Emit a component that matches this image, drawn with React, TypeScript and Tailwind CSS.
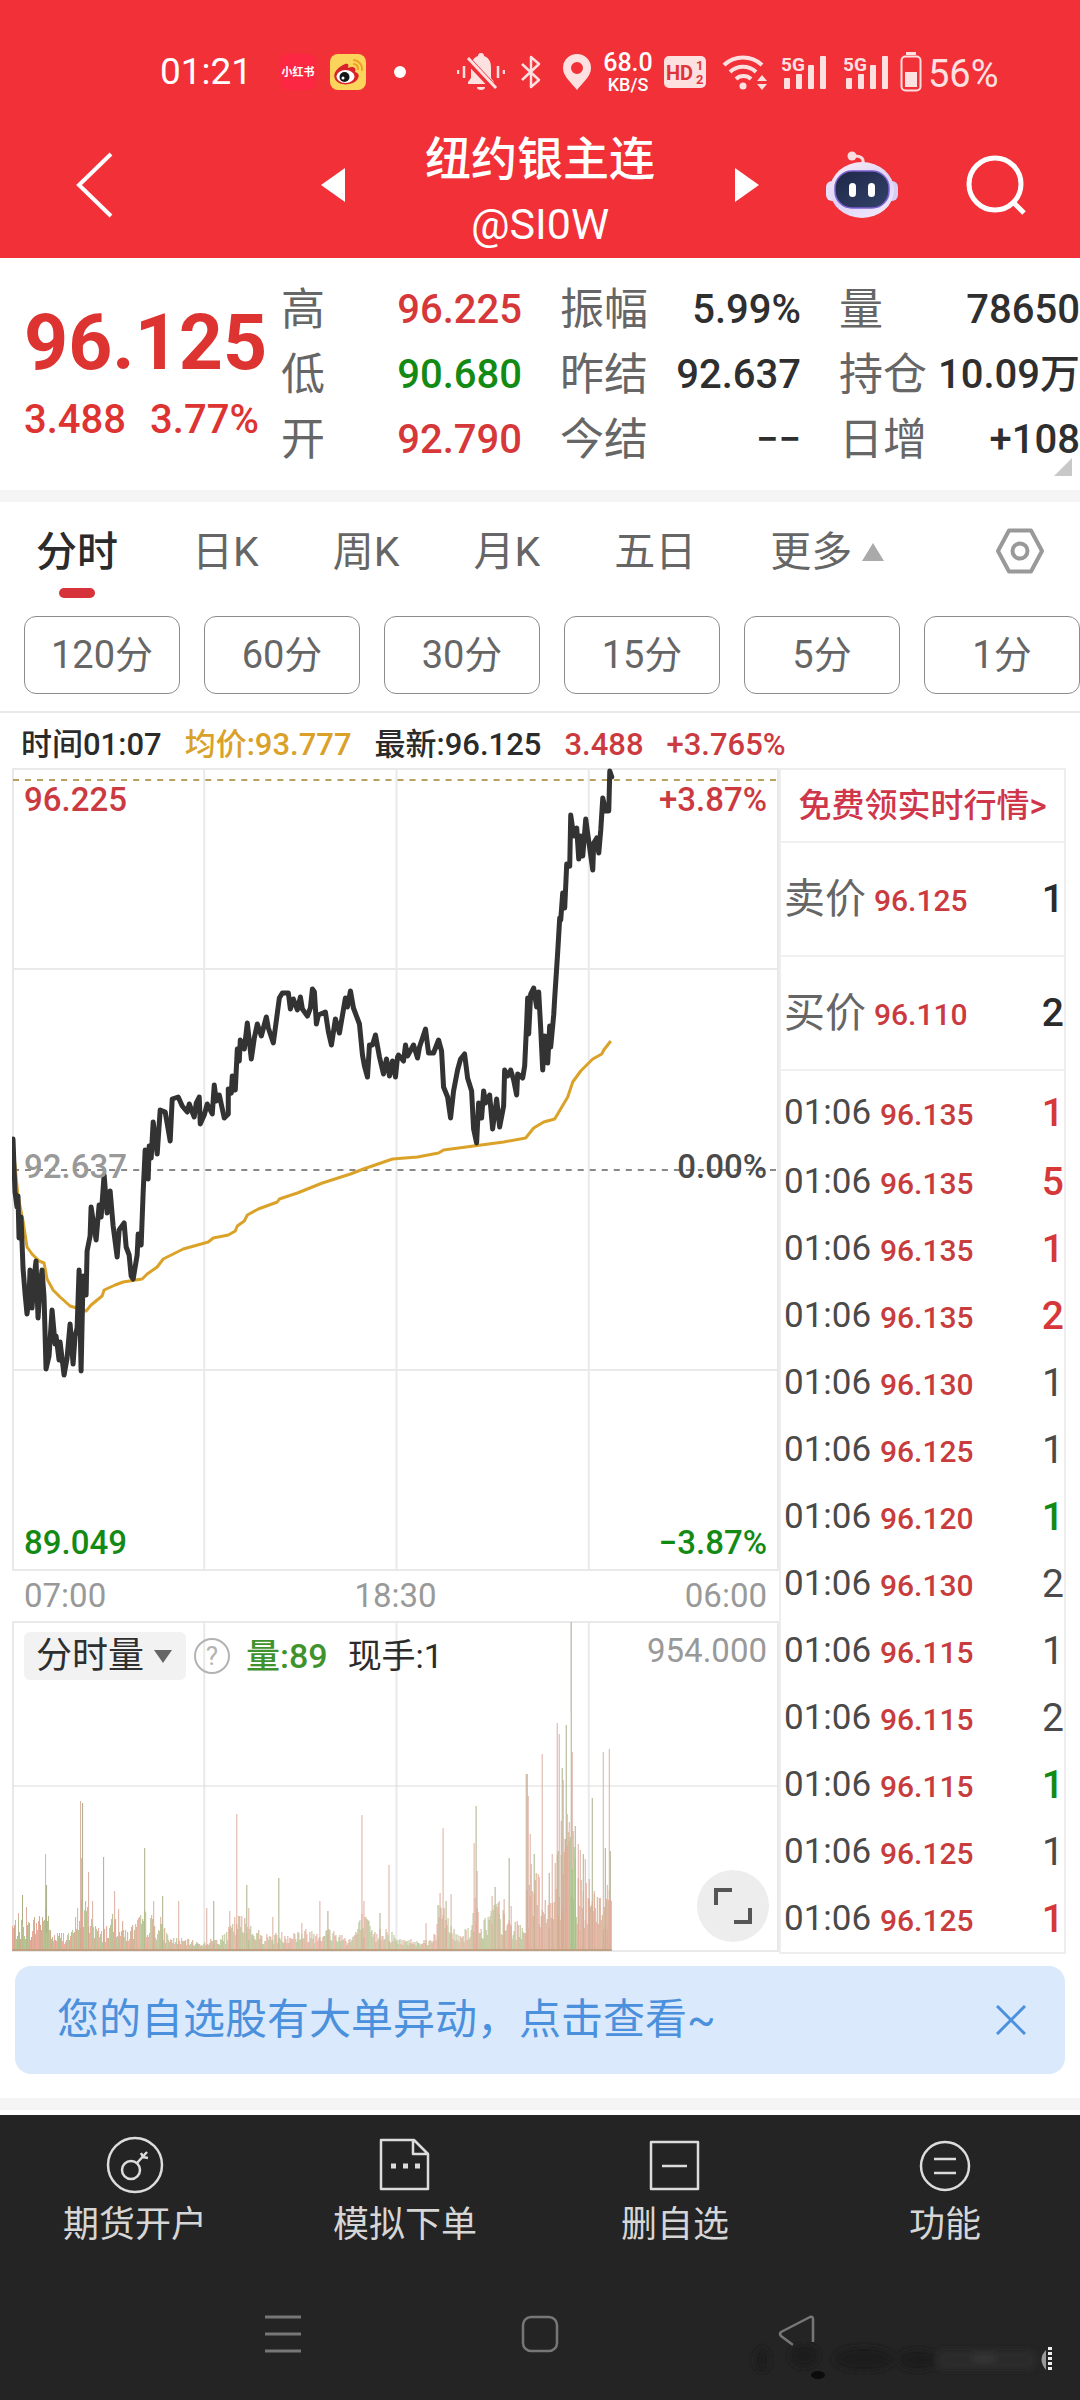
/**
 * QuotePage - Futures quote detail screen
 *
 * Status bar, instrument header, quote summary, intraday chart with
 * volume, tick list on the right and the bottom action bar.
 */

import React, { useMemo, useState } from 'react';
import clsx from 'clsx';

type Tone = 'red' | 'green' | 'dark' | 'gray';

const toneClass: Record<Tone, string> = {
  red: 'text-[#d6383a]',
  green: 'text-[#138a13]',
  dark: 'text-[#2f2f2f]',
  gray: 'text-[#4a4a4a]',
};

interface Stat {
  label: string;
  value: string;
  tone: Tone;
}

// Row by row, three columns
const stats: Stat[] = [
  { label: '高', value: '96.225', tone: 'red' },
  { label: '振幅', value: '5.99%', tone: 'dark' },
  { label: '量', value: '78650', tone: 'dark' },
  { label: '低', value: '90.680', tone: 'green' },
  { label: '昨结', value: '92.637', tone: 'dark' },
  { label: '持仓', value: '10.09万', tone: 'dark' },
  { label: '开', value: '92.790', tone: 'red' },
  { label: '今结', value: '−−', tone: 'dark' },
  { label: '日增', value: '+108', tone: 'dark' },
];

const tabs = ['分时', '日K', '周K', '月K', '五日'];
const periods = ['120分', '60分', '30分', '15分', '5分', '1分'];

interface Trade {
  price: string;
  qty: number;
  tone: Tone;
}

const trades: Trade[] = [
  { price: '96.135', qty: 1, tone: 'red' },
  { price: '96.135', qty: 5, tone: 'red' },
  { price: '96.135', qty: 1, tone: 'red' },
  { price: '96.135', qty: 2, tone: 'red' },
  { price: '96.130', qty: 1, tone: 'gray' },
  { price: '96.125', qty: 1, tone: 'gray' },
  { price: '96.120', qty: 1, tone: 'green' },
  { price: '96.130', qty: 2, tone: 'gray' },
  { price: '96.115', qty: 1, tone: 'gray' },
  { price: '96.115', qty: 2, tone: 'gray' },
  { price: '96.115', qty: 1, tone: 'green' },
  { price: '96.125', qty: 1, tone: 'gray' },
  { price: '96.125', qty: 1, tone: 'red' },
];

const pricePoints =
  '1,371 2,399 3,424 5,439 6,428 7,470 9,449 10,474 11,500 13,525 15,546 17,530 18,502 20,540 22,510 24,493 26,550 28,520 30,502 32,529 34,601 37,588 40,542 43,576 44,568 47,592 48,574 52,607 55,590 58,556 61,596 63,568 65,560 67,502 69,603 ' +
  '71,508 74,527 75,483 78,468 79,439 84,472 87,437 89,449 92,407 95,445 98,423 101,458 105,489 107,462 112,455 114,479 117,487 119,508 121,511 125,487 126,466 129,477 131,424 133,382 136,411 137,378 139,390 141,354 145,386 148,342 153,344 158,373 160,331 166,329 170,338 175,344 177,336 180,344 182,349 184,335 187,329 188,356 192,347 195,336 200,346 202,317 204,333 207,327 212,350 216,346 216,321 219,325 220,308 223,322 225,281 227,293 228,272 232,281 235,255 239,291 242,270 245,256 249,268 254,249 256,260 261,275 263,260 267,230 270,225 276,225 278,241 281,231 285,242 288,229 290,241 295,248 298,240 300,221 302,224 304,256 306,247 313,244 316,264 319,277 323,251 327,265 333,230 335,239 338,223 341,240 347,256 350,287 352,298 355,309 357,277 360,277 363,267 367,289 371,306 374,291 377,308 380,293 383,309 385,289 ' +
  '386,287 391,293 393,277 395,288 401,277 405,290 407,279 413,261 416,285 421,285 426,272 429,283 431,319 435,329 438,350 441,323 445,302 448,291 452,286 455,310 459,323 461,361 464,375 466,335 469,350 471,323 473,335 477,327 480,361 484,331 487,359 491,338 492,302 495,308 498,302 501,312 504,327 505,306 510,310 512,298 514,255 515,230 516,266 518,226 521,220 524,239 526,224 528,260 530,302 532,268 535,295 537,258 538,279 541,247 542,230 545,184 547,150 548,152 550,125 552,140 554,96 557,98 558,47 561,68 564,60 566,91 568,68 570,88 573,51 575,66 580,102 581,75 584,70 586,85 588,62 590,30 593,43 596,43 597,3 599,9';

const averagePoints =
  '1,378 6,428 11,453 15,479 20,486 27,493 32,495 35,511 41,522 48,529 58,538 74,543 79,537 90,528 92,522 103,517 111,514 130,511 135,506 145,499 151,491 171,481 196,474 201,470 216,467 223,463 225,458 232,453 235,447 246,441 265,434 267,431 285,425 310,415 338,406 351,401 380,391 405,389 426,385 431,382 461,378 491,374 513,370 521,360 531,354 542,351 555,329 560,314 568,303 580,291 589,286 591,282 598,273';

// [x, height] of the tall volume bars
const spikes: [number, number][] = [
  [6, 38], [10, 56], [14, 44], [33, 97], [34, 66], [68, 150], [69, 93], [70, 148], [76, 79], [80, 50], [91, 94], [102, 60], [106, 42],
  [132, 103], [141, 50], [148, 34], [150, 55], [166, 50], [194, 43], [201, 50], [217, 40], [224, 137], [234, 66], [236, 43], [260, 34], [266, 73],
  [289, 28], [307, 50], [315, 40], [349, 136], [351, 50], [367, 38], [376, 86], [413, 28], [425, 46], [427, 58], [430, 123], [433, 50], [438, 57],
  [461, 108], [463, 145], [464, 80], [479, 55], [482, 64], [486, 50], [491, 52], [496, 93], [498, 45],
  [513, 177], [514, 177], [515, 155], [517, 117], [521, 97], [526, 74], [529, 197], [536, 78], [539, 97], [544, 228], [545, 100], [546, 217],
  [548, 130], [549, 183], [550, 171], [552, 112], [553, 226], [554, 137], [556, 110], [558, 329], [559, 199], [560, 120], [562, 125], [565, 107], [567, 101],
  [570, 97], [572, 92], [576, 72], [579, 153], [581, 60], [590, 199], [592, 103], [594, 66], [596, 202], [597, 100],
];

// [x, typical height] of the ordinary bars
const envelope: [number, number][] = [
  [0, 26], [18, 24], [33, 40], [40, 13], [60, 16], [68, 48], [78, 36], [88, 14], [103, 32], [115, 16], [133, 34], [150, 20], [158, 10], [190, 5],
  [212, 12], [224, 30], [236, 26], [250, 12], [285, 16], [318, 18], [338, 9], [350, 32], [362, 14], [370, 22], [386, 8], [418, 8], [430, 44], [442, 14],
  [455, 20], [463, 46], [470, 24], [482, 44], [492, 30], [500, 24], [512, 20], [516, 80], [525, 62], [536, 40], [545, 90], [558, 115], [566, 60], [580, 48], [592, 40], [598, 56],
];

interface Bar {
  x: number;
  height: number;
  fill: string;
}

function buildVolume(): Bar[] {
  let seed = 7;
  const random = () => {
    seed = (seed * 1103515245 + 12345) % 2147483648;
    return seed / 2147483648;
  };
  const fills = ['#b3bd8c', '#eaa79b', '#cfab8d', '#b9c495'];
  const bars: Bar[] = [];
  let seg = 0;
  for (let x = 0; x <= 598; x++) {
    while (seg < envelope.length - 2 && envelope[seg + 1][0] < x) seg++;
    const [x0, h0] = envelope[seg];
    const [x1, h1] = envelope[seg + 1];
    const base = h0 + ((h1 - h0) * (x - x0)) / (x1 - x0);
    const height = 3 + base * (0.3 + 0.9 * random());
    let fill = fills[Math.floor(random() * 4)];
    if (x > 556 && x < 564) fill = '#a3c487';
    else if (x > 510) fill = random() < 0.7 ? '#d3ab90' : '#e8aa9c';
    bars.push({ x, height: Math.round(height), fill });
  }
  return bars;
}

/* ---------- Status bar ---------- */

function SignalIcon() {
  return (
    <svg viewBox="0 0 48 38" className="h-[38px] w-12" fill="#fde0e0">
      <rect x="4" y="25" width="6" height="11" rx="1" />
      <rect x="16" y="21" width="6" height="15" rx="1" />
      <rect x="28" y="12" width="6" height="24" rx="1" />
      <rect x="40" y="3" width="6" height="33" rx="1" />
      <text x="1" y="18" fontSize="19" fontWeight="700" fontFamily="Roboto">5G</text>
    </svg>
  );
}

function StatusBar() {
  return (
    <div className="flex h-[72px] items-center pl-40 text-white">
      <span className="w-[92px] text-[37px] leading-[44px]">01:21</span>
      <span className="ml-7 flex h-9 w-9 items-center justify-center rounded-lg bg-[#fc2843] text-[11px] leading-none font-bold">
        小红书
      </span>
      <svg viewBox="0 0 36 36" className="ml-3.5 h-9 w-9">
        <rect width="36" height="36" rx="8" fill="#fbd45c" />
        <path d="M24 6 A9 9 0 0 1 32 16 M24 10 A5 5 0 0 1 28 15" fill="none" stroke="#f29c28" strokeWidth="2" strokeLinecap="round" />
        <path d="M15 10 C8 13 2 19 5 25 C8 32 22 32 27 26 C30 22 29 19 25 18 C27 13 22 12 18 14 C19 10 18 9 15 10Z" fill="#d8232a" />
        <ellipse cx="15.500" cy="22.500" rx="9" ry="6.500" fill="#fff" />
        <circle cx="14.500" cy="23" r="5" fill="#161616" />
        <circle cx="13" cy="24" r="1.500" fill="#fff" />
      </svg>
      <span className="ml-7 h-3 w-3 rounded-full bg-white" />
      <svg viewBox="0 0 48 40" className="ml-[51px] h-10 w-12" fill="#fde0e0">
        <path d="M21 4a3 3 0 0 1 6 0c5 2 7 6 7 11v11l3 4v2H11v-2l3-4V15c0-5 2-9 7-11Z" />
        <path d="M20 35h8a4 3 0 0 1-8 0Z" />
        <path d="M9 6 38 37" stroke="#f03037" strokeWidth="7" />
        <path d="M11 6 39 36" stroke="#fde0e0" strokeWidth="3" />
        <path d="M1 18v4M7 14v12M41 14v12M47 18v4" stroke="#fde0e0" strokeWidth="2.500" />
      </svg>
      <svg viewBox="0 0 22 36" className="ml-[15px] h-9 w-[22px]" fill="none" stroke="#fde0e0" strokeWidth="2.500" strokeLinejoin="round">
        <path d="M2 10 19 26 11 33V3l8 7L2 26" />
      </svg>
      <svg viewBox="0 0 30 38" className="ml-5 h-[38px] w-[30px]">
        <path fillRule="evenodd" fill="#fde0e0" d="M15 1a14 14 0 0 0-14 14c0 9 9 15 14 22 5-7 14-13 14-22A14 14 0 0 0 15 1Zm0 8a6 6 0 1 1 0 12 6 6 0 0 1 0-12Z" />
      </svg>
      <span className="ml-2.5 flex w-[52px] flex-col items-center font-medium">
        <span className="text-[25px] leading-[25px]">68.0</span>
        <span className="text-[18px] leading-[19px]">KB/S</span>
      </span>
      <svg viewBox="0 0 42 32" className="ml-2.5 h-8 w-[42px]">
        <rect width="42" height="32" rx="5" fill="#fde0e0" />
        <g fill="#e0343b" fontFamily="Roboto" fontWeight="700">
          <text x="2" y="24" fontSize="20">HD</text>
          <text x="32" y="14" fontSize="13">1</text>
          <text x="32" y="28" fontSize="13">2</text>
        </g>
      </svg>
      <svg viewBox="0 0 46 38" className="ml-4 h-[38px] w-[46px]" fill="none" stroke="#fde0e0" strokeWidth="4">
        <path d="M2 12a28 28 0 0 1 38 0M8 19a19 19 0 0 1 26 0M14 26a11 11 0 0 1 15 0" />
        <circle cx="21" cy="33" r="3.500" fill="#fde0e0" stroke="none" />
        <path d="m35 28 5-6 5 6Zm0 3 5 6 5-6Z" fill="#fde0e0" stroke="none" />
      </svg>
      <span className="ml-3">
        <SignalIcon />
      </span>
      <span className="ml-3.5">
        <SignalIcon />
      </span>
      <svg viewBox="0 0 22 40" className="ml-2.5 h-10 w-[22px]">
        <rect x="6" y="0" width="10" height="3" fill="#fde0e0" />
        <rect x="1.500" y="4.500" width="19" height="34" rx="4" fill="none" stroke="#fde0e0" strokeWidth="2" />
        <rect x="5" y="20" width="12" height="15" fill="#fde0e0" />
      </svg>
      <span className="ml-1.5 pt-1 text-[38px] leading-[44px] text-[#fde0e0]">56%</span>
    </div>
  );
}

/* ---------- Header ---------- */

function RobotIcon() {
  return (
    <svg viewBox="0 0 74 68" className="h-[68px] w-[74px]">
      <defs>
        <linearGradient id="shell" x1="0" y1="0" x2="0.600" y2="1">
          <stop offset="0" stopColor="#fdeef4" />
          <stop offset="0.600" stopColor="#dcd3f8" />
          <stop offset="1" stopColor="#efe6fb" />
        </linearGradient>
        <linearGradient id="visor" x1="0" y1="0" x2="1" y2="1">
          <stop offset="0" stopColor="#1d2747" />
          <stop offset="1" stopColor="#34426a" />
        </linearGradient>
      </defs>
      <path d="M38 13c1-6-2-8-9-8" fill="none" stroke="#fbd9de" strokeWidth="3" />
      <circle cx="27" cy="5" r="4.500" fill="#fbdde2" />
      <rect x="1" y="30" width="12" height="20" rx="6" fill="#e6def8" />
      <rect x="61" y="30" width="12" height="20" rx="6" fill="#d6cef4" />
      <ellipse cx="37" cy="39" rx="32" ry="28" fill="url(#shell)" />
      <rect x="10" y="20" width="54" height="37" rx="17" fill="url(#visor)" stroke="#7a5fd0" strokeWidth="1.500" />
      <rect x="24" y="32" width="7" height="14" rx="3.500" fill="#fff" />
      <rect x="43" y="32" width="7" height="14" rx="3.500" fill="#fff" />
    </svg>
  );
}

function Header() {
  return (
    <header className="bg-[#f13037] pt-9 text-white">
      <StatusBar />
      <div className="grid h-[150px] grid-cols-[1fr_414px_1fr] items-center pt-1">
        <button aria-label="返回" className="ml-[76px] flex w-10">
          <svg viewBox="0 0 38 66" className="h-[66px] w-[38px]" fill="none" stroke="#fff" strokeWidth="4">
            <path d="M35 2 3 33 35 64" />
          </svg>
        </button>
        <div className="flex items-center justify-between">
          <button aria-label="上一个" className="-ml-3">
            <svg viewBox="0 0 24 34" className="h-[34px] w-6" fill="#fff">
              <path d="M24 0v34L0 17Z" />
            </svg>
          </button>
          <h1 className="flex flex-col items-center pt-3 font-medium">
            <span className="text-[46px] leading-[66px]">纽约银主连</span>
            <span className="text-[43px] leading-[64px] font-normal">@SI0W</span>
          </h1>
          <button aria-label="下一个" className="-mr-3">
            <svg viewBox="0 0 24 34" className="h-[34px] w-6" fill="#fff">
              <path d="M0 0v34l24-17Z" />
            </svg>
          </button>
        </div>
        <div className="flex items-center justify-end gap-[66px] pr-[53px]">
          <button aria-label="智能助手">
            <RobotIcon />
          </button>
          <button aria-label="搜索">
            <svg viewBox="0 0 62 62" className="h-[62px] w-[62px]" fill="none" stroke="#fff" strokeWidth="5">
              <circle cx="30" cy="30" r="26" />
              <path d="m48 48 11 11" />
            </svg>
          </button>
        </div>
      </div>
    </header>
  );
}

/* ---------- Quote summary ---------- */

function QuoteSummary() {
  return (
    <section className="relative flex h-[232px] items-start bg-white pt-[19px]">
      <div className="w-[281px] pl-6 text-[#dd3331]">
        <p className="pt-5 text-[77px] leading-[92px] font-bold">96.125</p>
        <p className="flex gap-6 pt-1.5 text-[40px] leading-[50px] font-medium">
          <span>3.488</span>
          <span>3.77%</span>
        </p>
      </div>
      <dl className="grid flex-1 grid-cols-3 gap-x-[38px]">
        {stats.map((s) => (
          <div key={s.label} className="flex h-[65px] items-center justify-between whitespace-nowrap">
            <dt className="text-[44px] leading-[60px] text-[#666]">{s.label}</dt>
            <dd className={clsx('text-[40px] leading-[60px] font-medium', toneClass[s.tone])}>{s.value}</dd>
          </div>
        ))}
      </dl>
      <svg viewBox="0 0 18 18" className="absolute right-2 bottom-3.5 h-[18px] w-[18px]" fill="#c8c8c8">
        <path d="M18 0v18H0Z" />
      </svg>
    </section>
  );
}

/* ---------- Period tabs ---------- */

function PeriodTabs() {
  const [active, setActive] = useState('分时');

  return (
    <section className="border-t-[12px] border-b-2 border-t-[#f5f5f5] border-b-[#e8e8e8]">
      <div className="flex h-[114px] items-start pt-5 pr-9 pl-9">
        <nav className="flex flex-1 gap-[74px] text-[41px] leading-[60px] whitespace-nowrap text-[#666]">
          {tabs.map((tab) => (
            <button
              key={tab}
              onClick={() => setActive(tab)}
              className={clsx('flex flex-col items-center', active === tab && 'font-medium text-[#2b2b2b]')}
            >
              {tab}
              {active === tab && <span className="mt-1.5 h-2.5 w-9 rounded-full bg-[#d6333a]" />}
            </button>
          ))}
          <button className="flex h-[60px] items-center gap-2.5">
            更多
            <svg viewBox="0 0 22 18" className="h-[18px] w-[22px]" fill="#aaa">
              <path d="M11 0 22 18H0Z" />
            </svg>
          </button>
        </nav>
        <button aria-label="设置" className="mt-1.5">
          <svg viewBox="0 0 48 46" className="h-[46px] w-12" fill="none" stroke="#999" strokeWidth="4" strokeLinejoin="round">
            <path d="M13 2.500h22L46 23 35 43.500H13L2 23Z" />
            <circle cx="24" cy="23" r="7.500" />
          </svg>
        </button>
      </div>
      <div className="flex gap-6 pb-[17px] pl-6">
        {periods.map((p) => (
          <button
            key={p}
            className="h-[78px] flex-1 rounded-xl border-[1px] border-[#8c8c8c] text-[38px] leading-[60px] text-[#666]"
          >
            {p}
          </button>
        ))}
      </div>
    </section>
  );
}

/* ---------- Charts ---------- */

function PriceChart() {
  return (
    <div className="relative h-[803px]">
      <svg viewBox="0 0 766 803" preserveAspectRatio="none" className="h-full w-full">
        <g stroke="#e9e9e9" strokeWidth="2" fill="none">
          <rect x="1" y="1" width="764" height="801" />
          <path d="M1 201H765M1 602H765M192 1V802M384 1V802M576 1V802" />
        </g>
        <path d="M1 12H765" stroke="#b8a060" strokeWidth="2" strokeDasharray="6 6" />
        <path d="M1 402H765" stroke="#888" strokeWidth="2" strokeDasharray="6 6" />
        <polyline points={averagePoints} fill="none" stroke="#dba229" strokeWidth="3" strokeLinejoin="round" />
        <polyline points={pricePoints} fill="none" stroke="#333" strokeWidth="5" strokeLinejoin="round" strokeLinecap="round" />
      </svg>
      <div className="absolute inset-0 flex flex-col justify-between px-3 pt-3 pb-2 text-[33px] leading-[40px] font-medium">
        <div className="flex justify-between text-[#cb3a40]">
          <span>96.225</span>
          <span>+3.87%</span>
        </div>
        <div className="flex justify-between pb-2.5 text-[#4a4a4a]">
          <span className="text-[#999]">92.637</span>
          <span>0.00%</span>
        </div>
        <div className="flex justify-between text-[#138a13]">
          <span>89.049</span>
          <span>−3.87%</span>
        </div>
      </div>
    </div>
  );
}

function VolumeChart() {
  const bars = useMemo(buildVolume, []);

  return (
    <div className="relative h-[331px]">
      <svg viewBox="0 0 766 331" preserveAspectRatio="none" className="h-full w-full">
        <g stroke="#e9e9e9" strokeWidth="2" fill="none">
          <rect x="1" y="1" width="764" height="329" />
          <path d="M192 1V330M384 1V330M576 1V330" />
        </g>
        <path d="M1 165H765" stroke="#dedede" strokeWidth="1" />
        {spikes.map(([x, h], i) => (
          <rect key={i} x={x} y={330 - h} width="1" height={h} fill={i % 3 === 1 ? '#a9b088' : '#dcaea0'} />
        ))}
        <rect x="558" y="1" width="1" height="90" fill="#c9c4c0" />
        {bars.map((b) => (
          <rect key={b.x} x={b.x} y={330 - b.height} width="1" height={b.height} fill={b.fill} />
        ))}
        <path d="M0 329H599" stroke="#c0a080" strokeWidth="2" />
      </svg>
      <div className="absolute inset-x-3 top-[11px] flex h-12 items-center text-[34px] leading-[48px]">
        <div className="relative">
          <select
            aria-label="指标"
            className="h-12 w-[162px] appearance-none rounded-md bg-[#f2f2f2] pl-3 text-[36px] leading-[48px] text-[#2f2f2f]"
          >
            <option>分时量</option>
          </select>
          <svg viewBox="0 0 18 13" className="pointer-events-none absolute top-[18px] right-3.5 h-[13px] w-[18px]" fill="#666">
            <path d="M0 0h18L9 13Z" />
          </svg>
        </div>
        <button
          aria-label="说明"
          className="ml-2 flex h-9 w-9 items-center justify-center rounded-full border-2 border-[#b3b3b3] text-[26px] leading-none text-[#b3b3b3]"
        >
          ?
        </button>
        <span className="ml-4 font-medium text-[#3f922c]">量:89</span>
        <span className="ml-5 text-[#2b2b2b]">现手:1</span>
        <span className="ml-auto self-start text-[33px] leading-[38px] text-[#999]">954.000</span>
      </div>
      <button
        aria-label="全屏"
        className="absolute right-2.5 bottom-2.5 flex h-[72px] w-[72px] items-center justify-center rounded-full bg-[#ededed]"
      >
        <svg viewBox="0 0 40 40" className="h-10 w-10" fill="none" stroke="#555" strokeWidth="4">
          <path d="M3 19V4h16M37 22v14H21" />
        </svg>
      </button>
    </div>
  );
}

function OrderRow({ label, price, qty }: { label: string; price: string; qty: number }) {
  return (
    <div className="flex h-[114px] items-center border-b-2 border-[#f0f0f0] pl-[3px]">
      <span className="text-[41px] leading-[60px] text-[#666]">{label}</span>
      <span className="ml-2 pt-1 text-[30px] leading-[40px] font-medium text-[#cb3a40]">{price}</span>
      <span className="ml-auto text-[39px] leading-[60px] font-medium text-[#2b2b2b]">{qty}</span>
    </div>
  );
}

function TickPanel() {
  return (
    <aside className="-mb-0.5 w-[287px] border-2 border-[#eee]">
      <a href="#level" className="flex h-[73px] items-center justify-center border-b-2 border-[#f0f0f0] text-[33px] leading-[48px] font-medium text-[#d0364a]">
        免费领实时行情&gt;
      </a>
      <OrderRow label="卖价" price="96.125" qty={1} />
      <OrderRow label="买价" price="96.110" qty={2} />
      <table className="mt-1.5 w-full">
        <tbody>
          {trades.map((t, i) => (
            <tr key={i} className="h-[67px] first:h-[71px]">
              <td className="w-[95px] pl-[3px] text-[35px] leading-[40px] text-[#4a4a4a]">01:06</td>
              <td className="pt-1 pl-1 text-[30px] leading-[40px] font-medium text-[#c83c3e]">{t.price}</td>
              <td className={clsx('text-right text-[39px] leading-[40px]', toneClass[t.tone], t.tone !== 'gray' && 'font-medium')}>
                {t.qty}
              </td>
            </tr>
          ))}
        </tbody>
      </table>
    </aside>
  );
}

function ChartSection() {
  return (
    <section>
      <p className="flex h-[55px] items-center gap-[23px] pt-2 pl-[21px] text-[31px] leading-[47px] font-medium whitespace-nowrap text-[#2b2b2b]">
        <span>时间01:07</span>
        <span className="text-[#d9a12a]">均价:93.777</span>
        <span>最新:96.125</span>
        <span className="text-[#cb3a40]">3.488</span>
        <span className="text-[#cb3a40]">+3.765%</span>
      </p>
      <div className="flex pr-3.5 pl-3">
        <div className="min-w-0 flex-1">
          <PriceChart />
          <div className="flex h-[50px] items-center justify-between px-3 text-[33px] leading-[40px] text-[#999]">
            <span>07:00</span>
            <span>18:30</span>
            <span>06:00</span>
          </div>
          <VolumeChart />
        </div>
        <TickPanel />
      </div>
    </section>
  );
}

/* ---------- Notice ---------- */

function Notice() {
  const [open, setOpen] = useState(true);
  if (!open) return null;

  return (
    <div className="mx-[15px] mt-3.5 flex h-[108px] items-center justify-between rounded-2xl bg-[#dae9fb] pr-[39px] pl-[42px] text-[#4a90dc]">
      <a href="#alerts" className="text-[42px] leading-[60px]">
        您的自选股有大单异动，点击查看~
      </a>
      <button aria-label="关闭" onClick={() => setOpen(false)}>
        <svg viewBox="0 0 30 30" className="h-[30px] w-[30px]" fill="none" stroke="#4a90dc" strokeWidth="3">
          <path d="m1 1 28 28M29 1 1 29" />
        </svg>
      </button>
    </div>
  );
}

/* ---------- Bottom bars ---------- */

const actions = [
  {
    label: '期货开户',
    icon: (
      <>
        <circle cx="30" cy="30" r="27" />
        <circle cx="26" cy="35" r="9" />
        <path d="m32 28 10-11M36 18l2 4 5 1" />
      </>
    ),
  },
  {
    label: '模拟下单',
    icon: (
      <>
        <path d="M6 5h33l14 14v35H6ZM38 5v14h15" />
        <path d="M16 31h5M28 31h5M40 31h5" strokeWidth="5" />
      </>
    ),
  },
  {
    label: '删自选',
    icon: <path d="M6 7h47v47H6ZM17 31h25" />,
  },
  {
    label: '功能',
    icon: (
      <>
        <circle cx="30" cy="31" r="24" />
        <path d="M19 24h22M19 38h22" />
      </>
    ),
  },
];

function BottomBar() {
  return (
    <footer className="bg-[#242424] pb-[46px]">
      <nav className="grid grid-cols-4 pt-5">
        {actions.map((a) => (
          <button key={a.label} className="flex flex-col items-center text-[36px] leading-[44px] text-[#d6d6d6]">
            <svg viewBox="0 0 60 60" className="mb-2 h-[60px] w-[60px]" fill="none" stroke="#dcdcdc" strokeWidth="2.500" strokeLinejoin="round">
              {a.icon}
            </svg>
            {a.label}
          </button>
        ))}
      </nav>
      <div className="relative mt-[67px] grid grid-cols-3 justify-items-center px-[154px]">
        <svg viewBox="0 0 40 40" className="h-10 w-10" stroke="#777" strokeWidth="3">
          <path d="M2 3h36M2 20h36M2 37h36" />
        </svg>
        <svg viewBox="0 0 40 40" className="h-10 w-10" fill="none" stroke="#777" strokeWidth="2.500">
          <rect x="3" y="3" width="34" height="34" rx="8" />
        </svg>
        <svg viewBox="0 0 40 40" className="h-10 w-10" fill="none" stroke="#777" strokeWidth="2.500" strokeLinejoin="round">
          <path d="M16 31 4 22q-2-2 0-4L33 3q3-1 3 2v23" />
        </svg>
        <svg viewBox="0 0 310 44" className="absolute right-6 -bottom-7 h-11 w-[310px]">
          <defs>
            <filter id="smudge">
              <feGaussianBlur stdDeviation="3" />
            </filter>
          </defs>
          <g fill="#1a1a1a" filter="url(#smudge)">
            <ellipse cx="16" cy="22" rx="7" ry="12" />
            <ellipse cx="58" cy="18" rx="14" ry="11" />
            <ellipse cx="118" cy="21" rx="30" ry="12" />
            <ellipse cx="172" cy="22" rx="20" ry="10" />
            <rect x="190" y="12" width="100" height="20" rx="8" fill="#2c2c2c" />
            <ellipse cx="238" cy="20" rx="14" ry="5" fill="#353535" />
          </g>
          <ellipse cx="72" cy="37" rx="7" ry="4" fill="#0c0c0c" />
          <path d="M300 12q-9 9 0 20Z" fill="#999" />
          <path d="M304 9v24" stroke="#eee" strokeWidth="4" strokeDasharray="3 2" />
        </svg>
      </div>
    </footer>
  );
}

export default function App() {
  return (
    <div className="min-h-screen bg-white font-['Roboto','Noto_Sans_CJK_SC',sans-serif]">
      <Header />
      <main>
        <QuoteSummary />
        <PeriodTabs />
        <ChartSection />
        <Notice />
        <div className="mt-6 mb-[5px] h-3 bg-[#f5f5f5]" />
      </main>
      <BottomBar />
    </div>
  );
}
